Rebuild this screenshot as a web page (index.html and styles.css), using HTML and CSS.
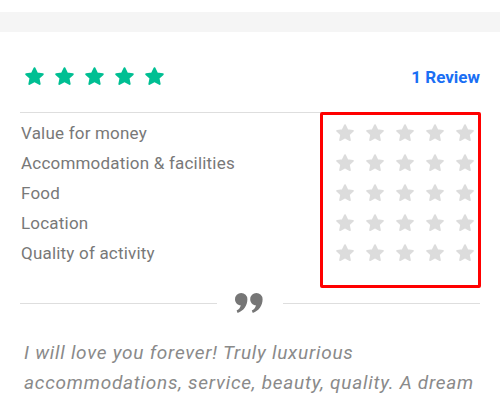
FILE: index.html
```html
<!DOCTYPE html>
<html lang="en">
<head>
<meta charset="utf-8">
<title>Reviews</title>
<link rel="stylesheet" href="styles.css">
</head>
<body>
<svg class="defs" width="0" height="0" aria-hidden="true">
  <symbol id="star" viewBox="0 0 24 24">
    <polygon points="12,2.5 14.9,8.6 21.5,9.4 16.6,13.9 17.9,20.5 12,17.3 6.1,20.5 7.4,13.9 2.5,9.4 9.1,8.6" stroke-width="2.2" stroke-linejoin="round"/>
  </symbol>
</svg>
<div class="band"></div>
<main class="card">
  <div class="header">
    <div class="stars stars-main">
      <svg class="star green"><use href="#star"/></svg>
      <svg class="star green"><use href="#star"/></svg>
      <svg class="star green"><use href="#star"/></svg>
      <svg class="star green"><use href="#star"/></svg>
      <svg class="star green"><use href="#star"/></svg>
    </div>
    <a class="review-link" href="#">1 Review</a>
  </div>

  <div class="ratings">
    <div class="label">Value for money</div>
    <div class="stars">
      <svg class="star grey"><use href="#star"/></svg><svg class="star grey"><use href="#star"/></svg><svg class="star grey"><use href="#star"/></svg><svg class="star grey"><use href="#star"/></svg><svg class="star grey"><use href="#star"/></svg>
    </div>
    <div class="label">Accommodation &amp; facilities</div>
    <div class="stars">
      <svg class="star grey"><use href="#star"/></svg><svg class="star grey"><use href="#star"/></svg><svg class="star grey"><use href="#star"/></svg><svg class="star grey"><use href="#star"/></svg><svg class="star grey"><use href="#star"/></svg>
    </div>
    <div class="label">Food</div>
    <div class="stars">
      <svg class="star grey"><use href="#star"/></svg><svg class="star grey"><use href="#star"/></svg><svg class="star grey"><use href="#star"/></svg><svg class="star grey"><use href="#star"/></svg><svg class="star grey"><use href="#star"/></svg>
    </div>
    <div class="label">Location</div>
    <div class="stars">
      <svg class="star grey"><use href="#star"/></svg><svg class="star grey"><use href="#star"/></svg><svg class="star grey"><use href="#star"/></svg><svg class="star grey"><use href="#star"/></svg><svg class="star grey"><use href="#star"/></svg>
    </div>
    <div class="label">Quality of activity</div>
    <div class="stars">
      <svg class="star grey"><use href="#star"/></svg><svg class="star grey"><use href="#star"/></svg><svg class="star grey"><use href="#star"/></svg><svg class="star grey"><use href="#star"/></svg><svg class="star grey"><use href="#star"/></svg>
    </div>
    <div class="highlight"></div>
  </div>

  <div class="divider">
    <span class="rule"></span>
    <svg class="quote" viewBox="0 0 28 20" aria-hidden="true">
      <path d="M0,6.2 A6.2,6.2 0 1 1 12.4,6.2 C12.4,12.5 8.6,17.8 2.6,20 L1.6,17.6 C4.2,16.2 5.4,14.4 5.7,12.3 C2.4,12 0,9.4 0,6.2 Z"/>
      <path d="M15.2,6.2 A6.2,6.2 0 1 1 27.6,6.2 C27.6,12.5 23.8,17.8 17.8,20 L16.8,17.6 C19.4,16.2 20.6,14.4 20.9,12.3 C17.6,12 15.2,9.4 15.2,6.2 Z"/>
    </svg>
    <span class="rule"></span>
  </div>

  <p class="quote-text">I will love you forever! Truly luxurious accommodations, service, beauty, quality. A dream</p>
</main>
</body>
</html>
```

FILE: styles.css
```css
* {
  box-sizing: border-box;
}

body {
  margin: 0;
  background: #ffffff;
  font-family: Roboto, "Liberation Sans", Arial, sans-serif;
  color: #777777;
}

.defs {
  position: absolute;
  width: 0;
  height: 0;
  overflow: hidden;
}

.band {
  margin-top: 12px;
  height: 20px;
  background: #f5f5f5;
}

.card {
  padding: 0 20px;
}

.header {
  display: flex;
  justify-content: space-between;
  align-items: center;
  padding: 34px 0 25px;
  border-bottom: 1px solid #dedede;
}

.stars {
  display: flex;
  gap: 10px;
}

.stars-main {
  gap: 9px;
  margin-left: 4px;
}

.star {
  width: 20px;
  height: 20px;
  display: block;
}

.stars-main .star {
  width: 21px;
  height: 21px;
}

.star.green {
  fill: #00bf93;
  stroke: #00bf93;
}

.star.grey {
  fill: #dcdcdc;
  stroke: #dcdcdc;
}

.review-link {
  color: #1a6ff4;
  font-weight: 700;
  font-size: 17px;
  text-decoration: none;
  margin-right: 0;
}

.ratings {
  position: relative;
  display: grid;
  grid-template-columns: 1fr auto;
  grid-auto-rows: 30px;
  align-items: center;
  padding: 5px 5px 0 1px;
}

.label {
  font-size: 17px;
  letter-spacing: 0.2px;
  color: #787878;
}

.highlight {
  position: absolute;
  top: -1px;
  left: 300px;
  width: 161px;
  height: 176px;
  border: 3.5px solid #ff0000;
  border-radius: 2px;
  pointer-events: none;
}

.divider {
  display: flex;
  align-items: center;
  margin-top: 25px;
  height: 20px;
}

.rule {
  flex: 1;
  height: 1px;
  background: #dedede;
}

.quote {
  width: 28px;
  height: 20px;
  margin: 0 20px 0 18px;
  fill: #767676;
}

.quote-text {
  margin: 25px 0 0;
  padding: 0 4px;
  font-size: 19px;
  letter-spacing: 0.75px;
  line-height: 30px;
  font-style: italic;
  color: #8a8a8a;
}
```
